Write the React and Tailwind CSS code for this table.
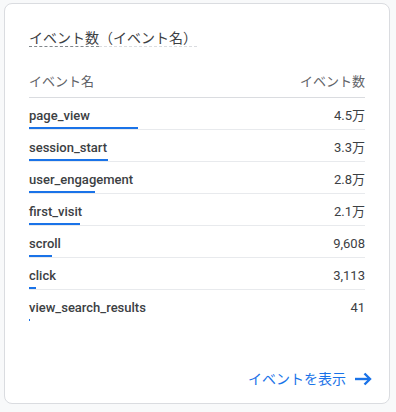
import { Fragment } from 'react';

const rows = [
    { name: 'page_view', count: '4.5万', bar: 109 },
    { name: 'session_start', count: '3.3万', bar: 79 },
    { name: 'user_engagement', count: '2.8万', bar: 66 },
    { name: 'first_visit', count: '2.1万', bar: 51 },
    { name: 'scroll', count: '9,608', bar: 23 },
    { name: 'click', count: '3,113', bar: 7 },
    { name: 'view_search_results', count: '41', bar: 1 },
];

const ArrowForward = () => (
    <svg width="18" height="14" viewBox="0 0 18 14" fill="none" stroke="#1a73e8" strokeWidth="2.4">
        <path d="M1 7H16" />
        <path d="M10.5 1.5L16 7l-5.5 5.5" />
    </svg>
);

const App = () => {
    return (
        <div className="w-[396px] h-[412px] bg-[#f8f9fa] pt-[3px] pl-[4px] font-['Roboto','Noto_Sans_CJK_JP',sans-serif]">
            <div className="w-[386px] h-[401px] bg-white border border-[#dadce0] rounded-lg px-6 pt-6 flex flex-col">
                <div className="text-[14px] leading-[20px] text-[#3c4043]">
                    <span className="border-b border-dashed border-[#80868b]">イベント数</span>
                    <span className="border-b border-dashed border-[#dadce0]">（イベント名）</span>
                </div>

                <div className="mt-[18px] h-8 flex items-center justify-between border-b border-[#dadce0] text-[13px] text-[#5f6368]">
                    <span>イベント名</span>
                    <span>イベント数</span>
                </div>

                {rows.map((row, i) => (
                    <Fragment key={row.name}>
                        <div className="pt-[8px]">
                            <div className="flex justify-between text-[13px] leading-[20px] text-[#3c4043]">
                                <span className="font-medium">{row.name}</span>
                                <span>{row.count}</span>
                            </div>
                            <div className="mt-[1px] h-[2px] flex">
                                <div className="h-full bg-[#1a73e8]" style={{ width: row.bar }} />
                            </div>
                        </div>
                        {i < rows.length - 1 && <div className="h-px bg-[#e8eaed]" />}
                    </Fragment>
                ))}

                <div className="mt-auto pb-[14px] flex justify-end items-center -mr-[7px]">
                    <span className="text-[14px] leading-[20px] text-[#1a73e8]">イベントを表示</span>
                    <span className="ml-[8px] flex">
                        <ArrowForward />
                    </span>
                </div>
            </div>
        </div>
    );
};

export default App;
